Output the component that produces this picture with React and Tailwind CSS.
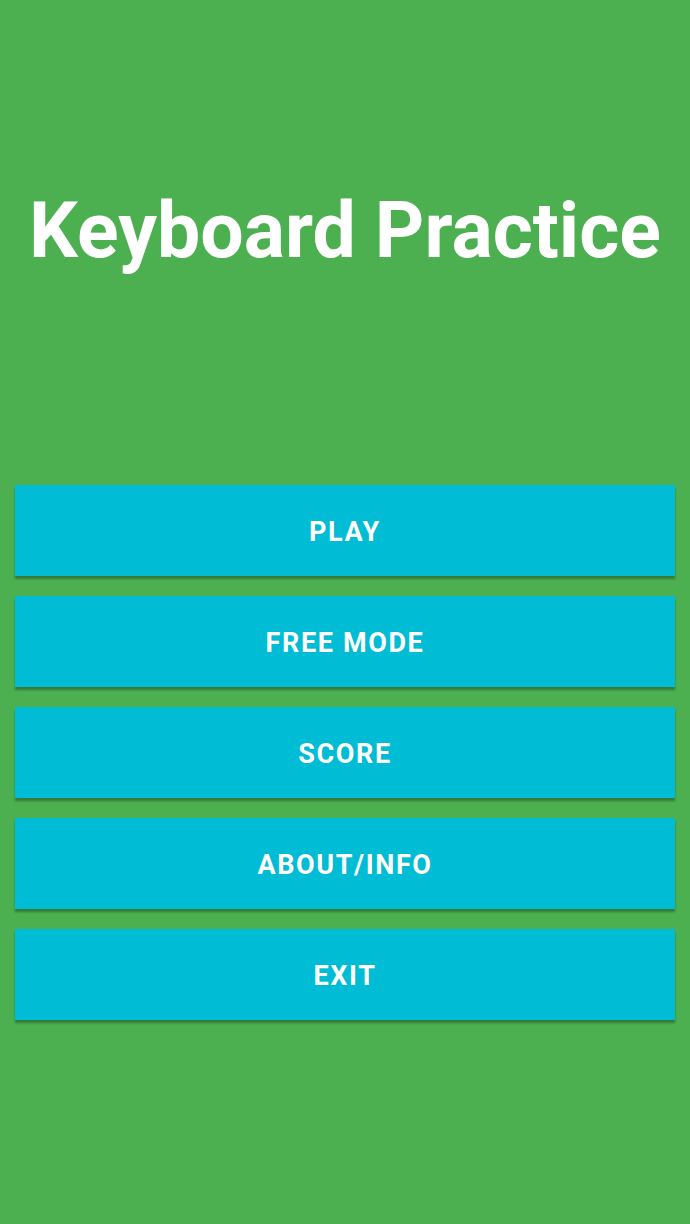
const items = ['PLAY', 'FREE MODE', 'SCORE', 'ABOUT/INFO', 'EXIT'];

export default function App() {
  return (
    <div
      className="min-h-screen w-full bg-[#4CAF50] flex flex-col px-[15px] pt-[193px]"
      style={{ fontFamily: 'Roboto, "Noto Sans", sans-serif' }}
    >
      <h1 className="text-white font-bold text-[77px] leading-[77px] text-center whitespace-nowrap">
        Keyboard Practice
      </h1>

      <div className="mt-[215px] flex flex-col gap-[20px]">
        {items.map((label) => (
          <button
            key={label}
            className="h-[91px] w-full pt-[4px] bg-[#00BCD4] text-white font-bold text-[27px] tracking-[0.06em] shadow-[0_3px_2px_rgba(0,0,0,0.3)]"
          >
            {label}
          </button>
        ))}
      </div>
    </div>
  );
}
